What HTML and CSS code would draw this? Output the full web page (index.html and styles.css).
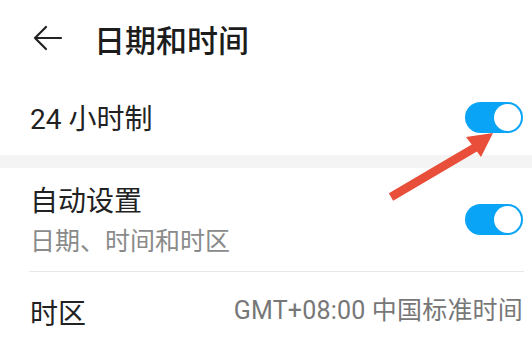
FILE: index.html
```html
<!DOCTYPE html>
<html lang="zh-CN">
<head>
<meta charset="utf-8">
<link rel="stylesheet" href="styles.css">
</head>
<body>
<div class="page">
  <header class="header">
    <svg class="back" width="30" height="26" viewBox="0 0 30 26">
      <path d="M28 13H3M13 2L2 13l11 11" fill="none" stroke="#222" stroke-width="2.2" stroke-linecap="round" stroke-linejoin="round"/>
    </svg>
    <h1 class="title">日期和时间</h1>
  </header>
  <div class="row row-first">
    <span class="label label-first">24 小时制</span>
    <span class="toggle"><span class="knob"></span></span>
  </div>
  <div class="band"></div>
  <div class="row row-auto">
    <div class="texts">
      <span class="label">自动设置</span>
      <span class="sub">日期、时间和时区</span>
    </div>
    <span class="toggle"><span class="knob"></span></span>
  </div>
  <div class="divider"></div>
  <div class="row row-zone">
    <span class="label">时区</span>
    <span class="value">GMT+08:00 中国标准时间</span>
  </div>
  <svg class="pointer" width="532" height="357" viewBox="0 0 532 357">
    <line x1="391" y1="197" x2="476" y2="147" stroke="#e84e3a" stroke-width="8.5" stroke-linecap="butt"/>
    <polygon points="493,133 466,137 481,157" fill="#e84e3a"/>
  </svg>
</div>
</body>
</html>
```
FILE: styles.css
```css
html, body {
  margin: 0;
  padding: 0;
  background: #fff;
}
body {
  font-family: Roboto, "Noto Sans CJK SC", sans-serif;
  width: 532px;
  height: 357px;
  overflow: hidden;
}
.page {
  position: relative;
  width: 532px;
  height: 357px;
}
.header {
  height: 76px;
  display: flex;
  align-items: center;
  padding-left: 33px;
  gap: 31px;
}
.back {
  display: block;
}
.title {
  margin: 0;
  font-size: 31px;
  font-weight: 500;
  color: #1c1c1c;
  font-family: "Noto Sans CJK SC", sans-serif;
  line-height: 1;
}
.row {
  display: flex;
  align-items: center;
  justify-content: space-between;
  padding: 0 9px 0 30px;
  box-sizing: border-box;
}
.row-first {
  height: 79px;
  padding-top: 4px;
}
.label-first {
  margin-top: 4px;
}
.row-auto {
  height: 103px;
}
.row-zone {
  height: 80px;
  padding-top: 6px;
}
.label {
  font-size: 28px;
  color: #222;
  line-height: 1.2;
  font-family: Roboto, "Noto Sans CJK SC", sans-serif;
}
.texts {
  display: flex;
  flex-direction: column;
  gap: 6px;
}
.texts .label {
  line-height: 32px;
}
.sub {
  font-size: 25px;
  color: #8a8a8a;
  line-height: 30px;
  font-family: "Noto Sans CJK SC", sans-serif;
}
.value {
  font-size: 25px;
  color: #777;
  line-height: 30px;
  margin-top: -9px;
  letter-spacing: 0.2px;
}
.band {
  height: 13px;
  background: #f4f4f4;
}
.divider {
  height: 1px;
  background: #e8e8e8;
  margin: 0 8px 0 29px;
}
.toggle {
  width: 58px;
  height: 31px;
  border-radius: 16px;
  background: #0aa4f6;
  display: flex;
  align-items: center;
  justify-content: flex-end;
  padding-right: 2px;
  box-sizing: border-box;
}
.knob {
  width: 27px;
  height: 27px;
  border-radius: 50%;
  background: #fff;
}
.pointer {
  position: absolute;
  left: 0;
  top: 0;
  pointer-events: none;
}
```
